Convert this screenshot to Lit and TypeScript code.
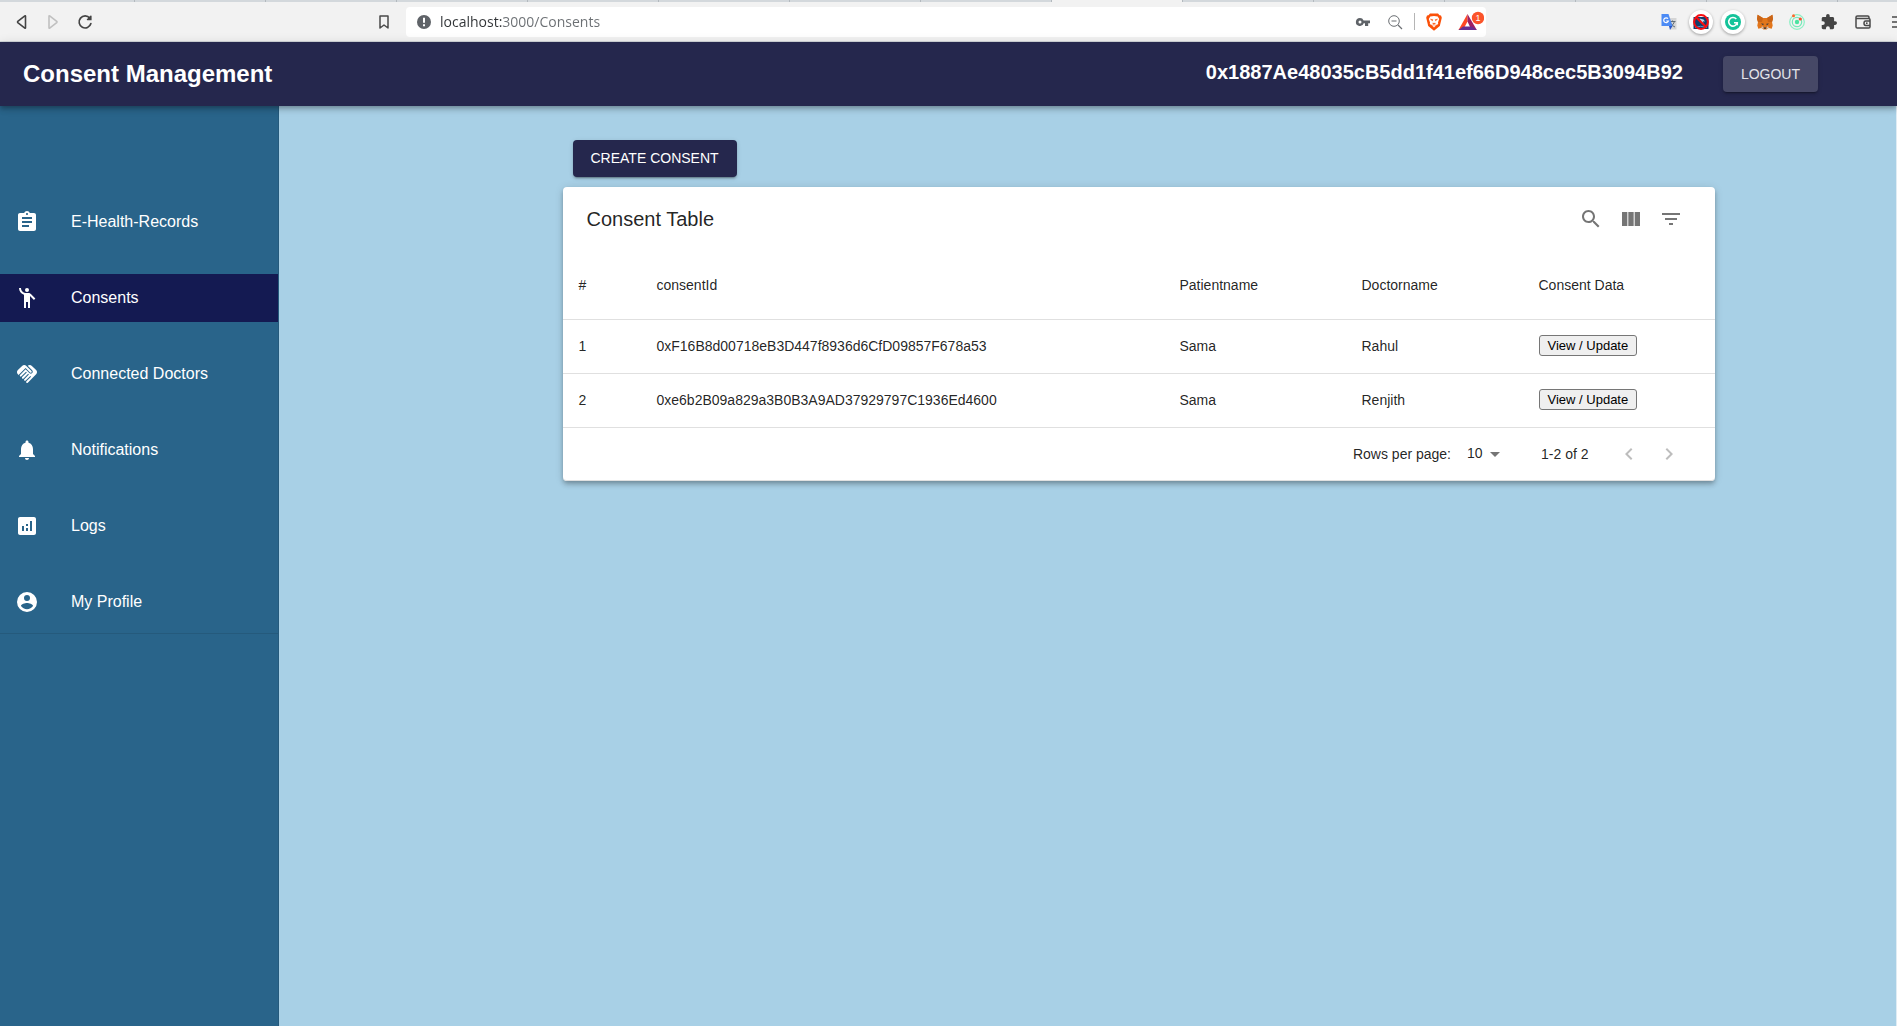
import { LitElement, html, css, svg } from "lit";
import { customElement } from "lit/decorators.js";

const icon = (body: unknown, cls = "icon") =>
  html`<svg class=${cls} viewBox="0 0 24 24" aria-hidden="true">${body}</svg>`;

const navItems = [
  {
    label: "E-Health-Records",
    glyph: svg`<path d="M19 3h-4.180C14.400 1.840 13.300 1 12 1c-1.300 0-2.400.84-2.820 2H5c-1.100 0-2 .9-2 2v14c0 1.100.9 2 2 2h14c1.100 0 2-.9 2-2V5c0-1.100-.9-2-2-2zm-7 0c.55 0 1 .45 1 1s-.45 1-1 1-1-.45-1-1 .45-1 1-1zm2 14H7v-2h7v2zm3-4H7v-2h10v2zm0-4H7V7h10v2z"/>`,
  },
  {
    label: "Consents",
    active: true,
    glyph: svg`<circle cx="12" cy="4" r="2"/><path d="M15.890 8.110C15.500 7.720 14.830 7 13.530 7h-2.540C8.240 6.990 6 4.750 6 2H4c0 3.160 2.110 5.840 5 6.710V22h2v-6h2v6h2V10.050L18.950 14l1.410-1.410-4.470-4.480z"/>`,
  },
  {
    label: "Connected Doctors",
    glyph: svg`<path d="M16.480 10.410c-.39.390-1.040.390-1.430 0l-4.470-4.460-7.050 7.040-.66-.63c-1.170-1.170-1.170-3.070 0-4.240l4.240-4.240c1.170-1.170 3.070-1.170 4.240 0L16.480 9c.39.390.39 1.020 0 1.410zm.7-2.120c.78.780.78 2.050 0 2.830-1.270 1.270-2.610.22-2.830 0l-3.760-3.760-5.570 5.570c-.39.390-.39 1.020 0 1.410.39.390 1.020.390 1.420 0l4.620-4.620.71.710-4.620 4.620c-.39.390-.39 1.020 0 1.410.39.390 1.020.390 1.420 0l4.620-4.620.71.710-4.620 4.620c-.39.390-.39 1.020 0 1.410.39.390 1.020.390 1.410 0l4.620-4.620.71.710-4.620 4.620c-.39.390-.39 1.020 0 1.410.39.390 1.020.390 1.410 0l8.320-8.340c1.170-1.170 1.170-3.070 0-4.240l-4.240-4.240c-1.150-1.150-3.010-1.170-4.180-.06l4.470 4.470z"/>`,
  },
  {
    label: "Notifications",
    glyph: svg`<path d="M12 22c1.100 0 2-.9 2-2h-4c0 1.100.89 2 2 2zm6-6v-5c0-3.070-1.640-5.640-4.500-6.320V4c0-.83-.67-1.500-1.500-1.500s-1.500.67-1.500 1.500v.68C7.630 5.360 6 7.920 6 11v5l-2 2v1h16v-1l-2-2z"/>`,
  },
  {
    label: "Logs",
    glyph: svg`<path d="M19 3H5c-1.100 0-2 .9-2 2v14c0 1.100.9 2 2 2h14c1.100 0 2-.9 2-2V5c0-1.100-.9-2-2-2zM9 17H7v-5h2v5zm4 0h-2v-3h2v3zm0-5h-2v-2h2v2zm4 5h-2V7h2v10z"/>`,
  },
  {
    label: "My Profile",
    glyph: svg`<path fill-rule="evenodd" d="M12 2a10 10 0 1 0 0 20 10 10 0 0 0 0-20zm0 3a3 3 0 1 1 0 6 3 3 0 0 1 0-6zm0 14.200c-2.500 0-4.710-1.280-6-3.220.03-1.990 4-3.080 6-3.080 1.990 0 5.970 1.090 6 3.080-1.290 1.940-3.500 3.220-6 3.220z"/>`,
  },
];

const tableActions = [
  {
    label: "Search",
    glyph: svg`<path d="M15.500 14h-.79l-.28-.27C15.410 12.590 16 11.110 16 9.500 16 5.910 13.090 3 9.500 3S3 5.910 3 9.500 5.910 16 9.500 16c1.610 0 3.090-.59 4.230-1.570l.27.280v.79l5 4.990L20.490 19l-4.990-5zm-6 0C7.010 14 5 11.990 5 9.500S7.010 5 9.500 5 14 7.010 14 9.500 11.990 14 9.500 14z"/>`,
  },
  {
    label: "View columns",
    glyph: svg`<path d="M14.670 5v14H9.330V5h5.340zm1 14H21V5h-5.330v14zm-7.340 0V5H3v14h5.330z"/>`,
  },
  {
    label: "Filter table",
    glyph: svg`<path d="M10 18h4v-2h-4v2zM3 6v2h18V6H3zm3 7h12v-2H6v2z"/>`,
  },
];

const columns = [
  { title: "#", width: 78 },
  { title: "consentId", width: 523 },
  { title: "Patientname", width: 182 },
  { title: "Doctorname", width: 177 },
  { title: "Consent Data", width: 192 },
];
const totalWidth = columns.reduce((sum, c) => sum + c.width, 0);

const consents = [
  { id: "0xF16B8d00718eB3D447f8936d6CfD09857F678a53", patient: "Sama", doctor: "Rahul" },
  { id: "0xe6b2B09a829a3B0B3A9AD37929797C1936Ed4600", patient: "Sama", doctor: "Renjith" },
];

@customElement("browser-bar")
class BrowserBar extends LitElement {
  static styles = css`
    :host {
      display: block;
      background: #f2f2f2;
      border-bottom: 1px solid #d3d8dc;
    }
    .tabs {
      display: flex;
      height: 2px;
      padding-left: 4px;
      background: #d3d8dc;
    }
    .tab {
      flex: none;
      width: 130px;
      border-right: 1px solid #b3b9be;
    }
    .tab.current {
      background: #f2f2f2;
    }
    .bar {
      display: flex;
      align-items: center;
      height: 39px;
      padding-left: 5px;
    }
    button {
      display: grid;
      place-items: center;
      flex: none;
      width: 32px;
      height: 30px;
      padding: 0;
      border: 0;
      background: none;
    }
    svg {
      display: block;
    }
    .s16 {
      width: 16px;
      height: 16px;
    }
    .bookmark {
      margin-left: 267px;
    }
    .address {
      display: flex;
      align-items: center;
      flex: 1;
      min-width: 0;
      height: 30px;
      padding-right: 2px;
      margin: 0 167px 0 6px;
      background: #fff;
      border-radius: 4px;
    }
    .site {
      width: 34px;
    }
    .url {
      flex: 1;
      min-width: 0;
      height: 24px;
      padding: 0;
      border: 0;
      outline: 0;
      font: 14px/20px "Open Sans", "Noto Sans", sans-serif;
      color: transparent;
      background: linear-gradient(90deg, #303336 62px, #6b6f73 62px);
      -webkit-background-clip: text;
      background-clip: text;
    }
    .rule {
      width: 1px;
      height: 17px;
      margin: 0 3px;
      background: #b5b5b5;
    }
    .rewards {
      width: 34px;
    }
    .badge {
      font: 9px/10px "Liberation Sans", sans-serif;
    }
    .round {
      width: 24px;
      height: 24px;
      margin: 3px 4px;
      border-radius: 50%;
      background: #fff;
      box-shadow: 0 1px 3px rgba(0, 0, 0, 0.35);
    }
    .extensions {
      display: flex;
    }
    .wallet {
      width: 36px;
    }
    .menu {
      justify-content: end;
      width: 16px;
    }
  `;

  render() {
    return html`
      <div class="tabs">
        ${Array.from({ length: 14 }, (_, i) => html`<div class="tab ${i === 8 ? "current" : ""}"></div>`)}
      </div>
      <div class="bar">
        <button aria-label="Back">
          <svg class="s16" viewBox="0 0 16 16"><path d="M12.500 2.200v11.600q0 .7-.7.300L4.800 8.600q-.6-.6 0-1.200l7-5.500q.7-.4.700.3z" fill="none" stroke="#444" stroke-width="1.600"/></svg>
        </button>
        <button aria-label="Forward" disabled>
          <svg class="s16" viewBox="0 0 16 16"><path d="M4 2.200v11.600q0 .7.700.3l7-5.500q.6-.6 0-1.200l-7-5.500q-.7-.4-.7.300z" fill="none" stroke="#c0c0c0" stroke-width="1.600"/></svg>
        </button>
        <button aria-label="Reload">
          <svg class="s16" viewBox="0 0 16 16"><path d="M12.800 4.200A6 6 0 1 0 13.900 9.600" fill="none" stroke="#444" stroke-width="1.700" stroke-linecap="round"/><path d="M14.600 1.900v4.300H10.300q-1-.3-.4-1l3.300-3.500q1.200-.7 1.400.2z" fill="#444"/></svg>
        </button>
        <button class="bookmark" aria-label="Bookmark this page">
          <svg class="s16" viewBox="0 0 16 16"><path d="M4 2h8v12l-4-3-4 3z" fill="none" stroke="#4a4a4a" stroke-width="1.500" stroke-linejoin="round"/></svg>
        </button>
        <div class="address">
          <button class="site" aria-label="Site information">
            <svg class="s16" viewBox="0 0 16 16"><circle cx="9" cy="8" r="7" fill="#5f6368"/><path d="M8 3.800h2v5H8zM8 10.300h2v2H8z" fill="#fff"/></svg>
          </button>
          <input class="url" type="text" aria-label="Address" value="localhost:3000/Consents" />
          <button aria-label="Passwords">
            <svg class="s16" viewBox="0 0 16 16"><path fill-rule="evenodd" d="M5 4a4 4 0 1 0 3.700 5.200H10V12h3.200V9.200H15V6.400H8.600A4 4 0 0 0 5 4zm0 2.500a1.500 1.500 0 1 1 0 3 1.500 1.500 0 0 1 0-3z" fill="#5f6368"/></svg>
          </button>
          <button aria-label="Zoom">
            <svg class="s16" viewBox="0 0 16 16"><circle cx="7" cy="7" r="5.300" fill="none" stroke="#6b6f73"/><path d="M4.500 7h5M11 11l4 4" fill="none" stroke="#6b6f73" stroke-width="1.200"/></svg>
          </button>
          <span class="rule"></span>
          <button aria-label="Shields">
            <svg width="16" height="18" viewBox="0 0 16 18"><path d="M4 .5h8l1.500 1.700 1.500.2.800 2.300-2 8.300L8 17.800 2.200 13 .2 4.700 1 2.400l1.500-.2z" fill="#fb5008"/><path d="M4.300 3.500 8 3l3.700.5 1.500 2.400-1.200 3.600.2 1.600-2 1.200L8 14.600l-2.200-2.300-2-1.200.2-1.600-1.200-3.600z" fill="#fff"/><path d="M4.500 6.200l2.400.5-.5 1.100zM11.500 6.200l-2.400.5.500 1.100zM6.600 10.300h2.800L8 11.700zM5.700 11.600l2 1.400M10.300 11.600l-2 1.400" fill="#fb5008" stroke="#fb5008" stroke-width=".5"/></svg>
          </button>
          <button class="rewards" aria-label="Rewards">
            <svg width="34" height="30" viewBox="0 0 34 30"><path d="M17.500 7 8.500 23h4.500L17.500 14.500z" fill="#ff4724"/><path d="M17.500 7v7.500l4 8.500h5.300z" fill="#9e1f63"/><path d="M8.500 23 13 19.500h9L26.800 23z" fill="#662d91"/><circle cx="28" cy="11" r="6.200" fill="#fb542b"/><text class="badge" x="28" y="14" text-anchor="middle" fill="#fff">1</text></svg>
          </button>
        </div>
        <div class="extensions">
          <button aria-label="Translate">
            <svg class="s16" viewBox="0 0 16 16"><path d="M6 4h9.500v11.500H9.500z" fill="#d5d5d5"/><path d="M8.500 7.500h6M11.500 6.500v1M13.500 7.500q-1 3.500-4 5M10 9.500q1 2.500 4 3.500" fill="none" stroke="#5f6b75"/><path d="M.5 0h7l4 12H.5z" fill="#4c8bf5"/><path d="m8 12 3.500 0-2.500 4z" fill="#2a56c6"/><path d="M7 4.700A2.400 2.400 0 1 0 7.400 7H5.200" fill="none" stroke="#fff" stroke-width="1.200"/></svg>
          </button>
          <button class="round" aria-label="Blocker">
            <svg class="s16" viewBox="0 0 16 16"><path d="M.5 3h15v12H.5z" fill="#123f6e"/><path d="M6.500 4.500l4 1 1.500 2-2-.3.5 2.800-2.500-2z" fill="#b9d4ea"/><path d="M2 13.500q5-2.500 12 0" fill="none" stroke="#5f93c4"/><circle cx="8" cy="8" r="6.900" fill="none" stroke="#f60d12" stroke-width="2"/><path d="m3.200 3.200 9.600 9.600" stroke="#f60d12" stroke-width="2.200"/></svg>
          </button>
          <button class="round" aria-label="Writing assistant">
            <svg class="s16" viewBox="0 0 16 16"><circle cx="8" cy="8" r="8" fill="#15c39a"/><path d="M11.300 5A4.300 4.300 0 1 0 12.200 8.700H9" fill="none" stroke="#fff" stroke-width="1.600"/><path d="M10 8.700h2.400v2.500" fill="none" stroke="#fff" stroke-width="1.300"/></svg>
          </button>
          <button aria-label="Crypto wallet">
            <svg class="s16" viewBox="0 0 16 16"><path d="M.6.800 6 4h4L15.400.8 16 5l-1 3 .7 3.500-1 3.300-3-.8L9.500 15.500h-3L4.300 14l-3 .8-1-3.300L1 8 0 5z" fill="#e2761b"/><path d="M.6.800 6 4 5 8 1 8 0 5zM15.400.8 10 4l1 4h4l1-3z" fill="#c96518"/><path d="M4 9.500l2.600.3-.4 1.500zM12 9.500l-2.600.3.4 1.500zM6.500 13.500h3l-.3 1.300H6.800z" fill="#233447"/><path d="M5 12l1.500 1.500v1.500L4.300 14zM11 12l-1.500 1.500v1.500l2.200-1z" fill="#d7c1b3"/></svg>
          </button>
          <button aria-label="Pulse">
            <svg class="s16" viewBox="0 0 16 16"><circle cx="8" cy="8" r="7.300" fill="none" stroke="#8cf0c4" stroke-width="1.200"/><circle cx="8" cy="8" r="4.700" fill="none" stroke="#74eab8" stroke-width="1.200"/><circle cx="8" cy="8" r="2.200" fill="#4be3a0"/><circle cx="4.500" cy="1.800" r="1.500" fill="#ff6a2b"/><circle cx="11.300" cy="5" r="1.600" fill="#f4512c"/></svg>
          </button>
          <button aria-label="Extensions">
            <svg class="s16" viewBox="1 1 22 22"><path d="M20.500 11H19V7c0-1.100-.9-2-2-2h-4V3.500a2.500 2.500 0 0 0-5 0V5H4c-1.100 0-2 .9-2 2v3.800h1.500a2.700 2.700 0 0 1 0 5.400H2V20c0 1.100.9 2 2 2h3.800v-1.500a2.700 2.700 0 0 1 5.400 0V22H17c1.100 0 2-.9 2-2v-4h1.500a2.500 2.500 0 0 0 0-5z" fill="#444"/></svg>
          </button>
          <button class="wallet" aria-label="Wallet">
            <svg class="s16" viewBox="0 0 16 16"><path d="M14 4.500V3.200q0-1.200-1.200-1.200H2.400Q1 2 1 3.300v9.400Q1 14 2.300 14h11.400q1.300 0 1.300-1.300V5.800q0-1.300-1.300-1.300H1.500" fill="none" stroke="#4a4a4a" stroke-width="1.500"/><path d="M15 7h-4.300q-1.700 0-1.700 2.200T10.700 11.400H15" fill="none" stroke="#4a4a4a" stroke-width="1.500"/><circle cx="11.800" cy="9.200" r=".9" fill="#4a4a4a"/></svg>
          </button>
          <button class="menu" aria-label="Menu">
            <svg width="5" height="16" viewBox="0 0 5 16"><path d="M0 3h5M0 8h5M0 13h5" stroke="#4a4a4a" stroke-width="1.700"/></svg>
          </button>
        </div>
      </div>
    `;
  }
}

@customElement("side-nav")
class SideNav extends LitElement {
  static styles = css`
    :host {
      display: block;
      box-sizing: border-box;
      width: 279px;
      flex: none;
      background: #29648a;
      border-right: 1px solid #255a7c;
    }
    .list {
      display: flex;
      flex-direction: column;
      gap: 28px;
      margin: 0;
      padding: 92px 0 7px;
      list-style: none;
      border-bottom: 1px solid #255a7c;
    }
    .link {
      display: flex;
      align-items: center;
      height: 48px;
      padding-left: 15px;
      font-size: 16px;
      line-height: 24px;
      color: #fff;
      text-decoration: none;
    }
    .link.active {
      background: #141a52;
    }
    .icon {
      width: 24px;
      height: 24px;
      margin-right: 32px;
      fill: #fff;
    }
  `;

  render() {
    return html`
      <nav aria-label="Main">
        <ul class="list">
          ${navItems.map(
            (item) => html`
              <li>
                <a class="link ${item.active ? "active" : ""}" href="#${item.label}">
                  ${icon(item.glyph)}<span>${item.label}</span>
                </a>
              </li>
            `
          )}
        </ul>
      </nav>
    `;
  }
}

@customElement("consent-table")
class ConsentTable extends LitElement {
  static styles = css`
    :host {
      display: block;
      background: #fff;
      border-radius: 4px;
      box-shadow: 0 2px 4px -1px rgba(0, 0, 0, 0.2), 0 4px 5px rgba(0, 0, 0, 0.14),
        0 1px 10px rgba(0, 0, 0, 0.12);
      font-size: 14px;
      line-height: 20px;
    }
    .toolbar {
      display: flex;
      align-items: center;
      justify-content: space-between;
      height: 64px;
      padding: 0 24px;
    }
    h2 {
      margin: 0;
      font-size: 20px;
      line-height: 32px;
      font-weight: 400;
    }
    .actions,
    .pages {
      display: flex;
    }
    .icon-button {
      display: grid;
      place-items: center;
      width: 40px;
      height: 40px;
      padding: 0;
      border: 0;
      background: none;
      fill: #757575;
    }
    .icon-button:disabled {
      fill: #bdbdbd;
    }
    .icon {
      width: 24px;
      height: 24px;
    }
    table {
      width: 100%;
      table-layout: fixed;
      border-collapse: separate;
      border-spacing: 0;
    }
    th,
    td {
      box-sizing: border-box;
      height: 54px;
      padding: 0 16px 2px;
      border-bottom: 1px solid #e0e0e0;
      font-weight: 400;
      text-align: left;
      white-space: nowrap;
    }
    th {
      height: 69px;
      padding-bottom: 0;
    }
    .view {
      display: block;
      height: 21px;
      padding: 0 8px;
      border: 1px solid #767676;
      border-radius: 3px;
      background: #efefef;
      font: 13px/19px "Liberation Sans", Arial, sans-serif;
      color: #000;
    }
    .footer {
      display: flex;
      align-items: center;
      justify-content: flex-end;
      height: 52px;
      padding-right: 26px;
      border-bottom: 1px solid #e0e0e0;
      border-radius: 0 0 4px 4px;
    }
    .rows {
      display: grid;
      width: 40px;
      margin: 0 34px 0 16px;
      align-items: center;
    }
    select,
    .arrow {
      grid-area: 1 / 1;
    }
    select {
      appearance: none;
      width: 100%;
      height: 24px;
      padding: 0 0 2px;
      border: 0;
      background: none;
      font: inherit;
      color: inherit;
    }
    .arrow {
      justify-self: end;
      width: 24px;
      height: 24px;
      fill: #757575;
      pointer-events: none;
    }
    .pages {
      margin-left: 20px;
    }
  `;

  render() {
    return html`
      <div class="toolbar">
        <h2>Consent Table</h2>
        <div class="actions">
          ${tableActions.map(
            (a) => html`<button class="icon-button" aria-label=${a.label}>${icon(a.glyph)}</button>`
          )}
        </div>
      </div>
      <table>
        <colgroup>
          ${columns.map((c) => html`<col style="width: ${(c.width / totalWidth) * 100}%" />`)}
        </colgroup>
        <thead>
          <tr>
            ${columns.map((c) => html`<th scope="col">${c.title}</th>`)}
          </tr>
        </thead>
        <tbody>
          ${consents.map(
            (row, i) => html`
              <tr>
                <td>${i + 1}</td>
                <td>${row.id}</td>
                <td>${row.patient}</td>
                <td>${row.doctor}</td>
                <td><button class="view">View / Update</button></td>
              </tr>
            `
          )}
        </tbody>
      </table>
      <div class="footer">
        <label for="rows">Rows per page:</label>
        <div class="rows">
          <select id="rows">
            <option selected>10</option>
            <option>15</option>
            <option>100</option>
          </select>
          ${icon(svg`<path d="m7 10 5 5 5-5z"/>`, "arrow")}
        </div>
        <span>1-2 of 2</span>
        <div class="pages">
          <button class="icon-button" aria-label="Previous page" disabled>
            ${icon(svg`<path d="M15.410 7.410 14 6l-6 6 6 6 1.410-1.410L10.830 12z"/>`)}
          </button>
          <button class="icon-button" aria-label="Next page" disabled>
            ${icon(svg`<path d="M10 6 8.590 7.410 13.170 12l-4.580 4.590L10 18l6-6z"/>`)}
          </button>
        </div>
      </div>
    `;
  }
}

@customElement("app-root")
class AppRoot extends LitElement {
  static styles = css`
    :host {
      display: flex;
      flex-direction: column;
      min-height: 100vh;
      font-family: "Liberation Sans", Arial, sans-serif;
      color: rgba(0, 0, 0, 0.87);
      background: #a8d0e6;
    }
    header {
      display: flex;
      align-items: center;
      height: 64px;
      padding: 0 79px 0 23px;
      background: #25274d;
      color: #fff;
      z-index: 1;
      box-shadow: 0 2px 4px -1px rgba(0, 0, 0, 0.2), 0 4px 5px rgba(0, 0, 0, 0.14),
        0 1px 10px rgba(0, 0, 0, 0.12);
    }
    h1 {
      flex: 1;
      margin: 0;
      font-size: 24px;
      line-height: 32px;
      font-weight: 700;
    }
    .account {
      margin-right: 40px;
      padding-bottom: 4px;
      font-size: 20px;
      line-height: 32px;
      font-weight: 700;
    }
    .button {
      height: 36px;
      padding: 0 18px;
      border: 0;
      border-radius: 4px;
      font: 14px/24px "Liberation Sans", Arial, sans-serif;
      color: #fff;
      text-transform: uppercase;
      background: #25274d;
      box-shadow: 0 3px 1px -2px rgba(0, 0, 0, 0.2), 0 2px 2px rgba(0, 0, 0, 0.14),
        0 1px 5px rgba(0, 0, 0, 0.12);
    }
    .logout {
      background: #464866;
      color: #e4e4ea;
    }
    .body {
      display: flex;
      flex: 1;
    }
    main {
      flex: 1;
      min-width: 0;
      padding: 34px 0 34px 102px;
      border-right: 1px solid #dfecf4;
    }
    .container {
      max-width: 1152px;
      margin: 0 auto;
    }
    .create {
      height: 37px;
      margin: 0 10px 10px;
      padding-bottom: 2px;
    }
  `;

  render() {
    return html`
      <browser-bar></browser-bar>
      <header>
        <h1>Consent Management</h1>
        <div class="account">0x1887Ae48035cB5dd1f41ef66D948cec5B3094B92</div>
        <button class="button logout">Logout</button>
      </header>
      <div class="body">
        <side-nav></side-nav>
        <main>
          <div class="container">
            <button class="button create">Create Consent</button>
            <consent-table></consent-table>
          </div>
        </main>
      </div>
    `;
  }
}
